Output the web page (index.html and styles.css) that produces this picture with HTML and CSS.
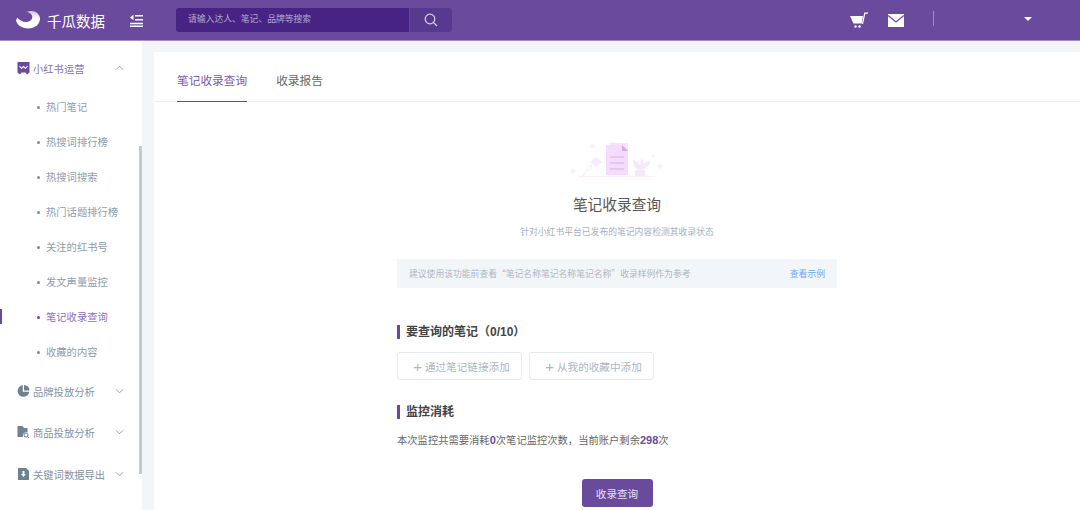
FILE: index.html
```html
<!DOCTYPE html>
<html lang="zh-CN">
<head>
<meta charset="utf-8">
<title>千瓜数据</title>
<link rel="stylesheet" href="styles.css">
</head>
<body>
<header class="topbar">
  <div class="brand">
    <svg class="logo" width="24" height="18" viewBox="0 0 24 18"><defs><linearGradient id="lg" x1="0" y1="0" x2="0" y2="1"><stop offset="0" stop-color="#cdbfe2"/><stop offset=".4" stop-color="#fff"/></linearGradient></defs><path d="M1.500 6.800C4 9.500 7 11.200 10.500 11 14 10.800 16.300 8.500 16.300 5.800 16.300 3.700 14 1.700 11 1 12 .3 14 0 15.500 0 20 0 24 3.500 24 8 24 13 19 17.500 12 17.500 6 17.500 .8 14 0 9.300z" fill="url(#lg)"/></svg>
    <span class="brand-name">千瓜数据</span>
  </div>
  <svg class="fold" width="13" height="13" viewBox="0 0 13 13"><path d="M0 3.500 3.500.8v5.400zM5 1h8v1.500H5zM5 5h8v1.500H5zM0 8.800h13v1.500H0zM0 11.500h13V13H0z" fill="#fff"/></svg>
  <div class="search">
    <div class="search-input">请输入达人、笔记、品牌等搜索</div>
    <div class="search-btn"><svg width="14" height="14" viewBox="0 0 14 14" fill="none" stroke="#d5cce6" stroke-width="1.300"><circle cx="6" cy="6" r="4.800"/><path d="m9.500 9.500 3.500 3.500"/></svg></div>
  </div>
  <div class="top-right">
    <svg class="cart" width="18" height="16" viewBox="0 0 18 16"><path d="M0 4h13l-1.300 7.500H3.500z" fill="#fff"/><path d="M12.500 12 14.800 1.200H18" fill="none" stroke="#fff" stroke-width="1.200"/><circle cx="5.500" cy="14.500" r="1.200" fill="#fff"/><circle cx="9.500" cy="14.500" r="1.200" fill="#fff"/></svg>
    <svg class="mail" width="16" height="13" viewBox="0 0 16 13"><rect width="16" height="13" fill="#fff"/><path d="m0 1.500 8 6.500 8-6.500" fill="none" stroke="#6a4a9c" stroke-width="1.200"/></svg>
    <span class="divider"></span>
    <span class="caret"></span>
  </div>
</header>

<div class="page">
  <aside class="sidebar">
    <div class="scrollbar"></div>
    <div class="group open">
      <svg class="gicon" width="12" height="13" viewBox="0 0 12 13"><path d="M0 0h12v10.500l-2.500 2-1.500-2H4l-1.500 2-2.500-2z" fill="#6a4a9c"/><path d="m2 4 2 2.500L6 4.500l2 2L10 4" fill="none" stroke="#fff" stroke-width="1.100"/></svg>
      <span class="gname">小红书运营</span>
      <svg class="chev" width="9" height="6" viewBox="0 0 10 6" fill="none" stroke="#8b97a6"><path d="m1 5 4-4 4 4"/></svg>
    </div>
    <ul class="submenu">
      <li class="sub">热门笔记</li>
      <li class="sub">热搜词排行榜</li>
      <li class="sub">热搜词搜索</li>
      <li class="sub">热门话题排行榜</li>
      <li class="sub">关注的红书号</li>
      <li class="sub">发文声量监控</li>
      <li class="sub active">笔记收录查询</li>
      <li class="sub">收藏的内容</li>
    </ul>
    <div class="group g1">
      <svg class="gicon" width="12" height="12" viewBox="0 0 12 12"><path d="M5.300.3v6.400h6.400A5.800 5.800 0 1 1 5.300.3z" fill="#6f8093"/><path d="M6.500 0A5.500 5.500 0 0 1 12 5.500H6.500z" fill="#6f8093"/></svg>
      <span class="gname">品牌投放分析</span>
      <svg class="chev" width="9" height="6" viewBox="0 0 10 6" fill="none" stroke="#8b97a6"><path d="m1 1 4 4 4-4"/></svg>
    </div>
    <div class="group g2">
      <svg class="gicon" width="12" height="12" viewBox="0 0 12 12"><path d="M0 0h5l1.500 2H10v4.500A3.500 3.500 0 0 0 5.500 11H0z" fill="#6f8093"/><circle cx="8.500" cy="9" r="2" fill="none" stroke="#6f8093"/><path d="m10 10.500 1.500 1.500" stroke="#6f8093"/></svg>
      <span class="gname">商品投放分析</span>
      <svg class="chev" width="9" height="6" viewBox="0 0 10 6" fill="none" stroke="#8b97a6"><path d="m1 1 4 4 4-4"/></svg>
    </div>
    <div class="group g3">
      <svg class="gicon" width="11" height="12" viewBox="0 0 11 12"><path d="M0 0h8l3 3v9H0z" fill="#6f8093"/><path d="M4.500 3h2v3H8L5.500 9 3 6h1.500z" fill="#fff"/></svg>
      <span class="gname">关键词数据导出</span>
      <svg class="chev" width="9" height="6" viewBox="0 0 10 6" fill="none" stroke="#8b97a6"><path d="m1 1 4 4 4-4"/></svg>
    </div>
  </aside>

  <main class="main">
    <nav class="tabs">
      <a class="tab current">笔记收录查询</a>
      <a class="tab">收录报告</a>
    </nav>
    <section class="content">
      <svg class="hero" width="94" height="35" viewBox="0 0 94 35">
        <path d="M8 33.500h77" stroke="#f8f1fd" stroke-width="1.500"/>
        <rect x="39" y="0" width="19" height="30" fill="#f6e4fc"/>
        <path d="M36 2h16l6 6v24H36z" fill="#f3dcfc"/>
        <path d="M52 2v6h6z" fill="#d6a6f3"/>
        <path d="M40 14h14M40 20h14M40 26h14" stroke="#e2bdf4" stroke-width="1.500"/>
        <path d="M22 0l3 3-3 3-3-3zM3 25l3 3-3 3-3-3zM90 20l3 3-3 3-3-3zM83 11l2 2-2 2-2-2z" fill="#f9f0fd"/>
        <path d="M13 33l3-5 6-2-2-5" stroke="#f7ecfc" stroke-width="1.200" fill="none"/>
        <path d="M20 19l6-5 6 5-6 5z" fill="#f7ecfc"/>
        <path d="M65 27h10v6H65z" fill="#f5e8fb"/>
        <path d="M70 27c-5-1-7-5-7-10 5 1 8 5 7 10zm0 0c-1-4 0-8 2-12 2 4 1 9-2 12zm0 0c0-5 4-8 10-9 0 5-4 8-10 9z" fill="#f5e8fb"/>
      </svg>
      <h1 class="title">笔记收录查询</h1>
      <p class="subtitle">针对小红书平台已发布的笔记内容检测其收录状态</p>
      <div class="tip">
        <span class="tip-text">建议使用该功能前查看“笔记名称笔记名称笔记名称”收录样例作为参考</span>
        <a class="tip-link">查看示例</a>
      </div>
      <h2 class="sec first">要查询的笔记（0/10）</h2>
      <div class="add-row">
        <button class="add"><span class="plus">+</span>通过笔记链接添加</button>
        <button class="add"><span class="plus">+</span>从我的收藏中添加</button>
      </div>
      <h2 class="sec second">监控消耗</h2>
      <p class="cost">本次监控共需要消耗<b>0</b>次笔记监控次数，当前账户剩余<b>298</b>次</p>
      <div class="actions"><button class="submit">收录查询</button></div>
    </section>
  </main>
</div>
</body>
</html>
```

FILE: styles.css
```css
* { box-sizing: border-box; }
html, body { margin: 0; padding: 0; }
body {
  width: 1080px;
  height: 510px;
  overflow: hidden;
  background: #f3f6f9;
  font-family: "Liberation Sans", "Noto Sans CJK SC", sans-serif;
}
h1, h2, p, ul { margin: 0; padding: 0; }
ul { list-style: none; }

.topbar {
  height: 41px;
  background: #6a4a9c;
  border-bottom: 1px solid #a18fc4;
  display: flex;
  align-items: center;
  color: #fff;
}
.brand { display: flex; align-items: center; margin-left: 16px; width: 114px; }
.logo { flex: none; }
.brand-name { margin-left: 7px; font-size: 14.500px; white-space: nowrap; }
.fold { flex: none; margin-left: 0; }
.search { display: flex; margin-left: 33px; width: 276px; height: 24px; border-radius: 3px; overflow: hidden; }
.search-input { width: 233px; background: #472483; color: #b6a8d1; font-size: 8.800px; line-height: 23px; padding-left: 12px; }
.search-btn { flex: 1; margin-left: 1px; background: #573a8f; display: flex; align-items: center; justify-content: center; }
.top-right { margin-left: auto; display: flex; align-items: center; }
.cart { margin-right: 20px; }
.mail { margin-right: 29px; }
.divider { width: 1px; height: 15px; background: #a18fc4; margin-right: 90px; margin-top: -3px; }
.caret { width: 0; height: 0; border: 4px solid transparent; border-top: 4px solid #fff; border-bottom: 0; margin-right: 48px; margin-top: -3px; }

.page { display: flex; height: 469px; }

.sidebar {
  position: relative;
  width: 142px;
  flex: none;
  background: #fff;
  padding-top: 17px;
}
.scrollbar { position: absolute; left: 139px; top: 105px; width: 3px; height: 328px; background: #c3cad0; }
.group { display: flex; align-items: center; height: 20px; padding-left: 17px; font-size: 10.300px; color: #8593a1; white-space: nowrap; }
.group.open .gname { color: #8a73b4; }
.gicon { flex: none; width: 13px; }
.gname { margin-left: 3px; }
.chev { position: absolute; left: 115px; }
.submenu { padding-top: 12px; }
.sub {
  position: relative;
  height: 35px;
  line-height: 35px;
  padding-left: 46px;
  font-size: 10.300px;
  color: #8f9cab;
}
.sub::before {
  content: "";
  position: absolute;
  left: 37px;
  top: 16px;
  width: 3px;
  height: 3px;
  border-radius: 50%;
  background: #7c8a99;
}
.sub.active { color: #8d70bd; }
.sub.active::before { background: #6a4a9c; }
.sub.active::after {
  content: "";
  position: absolute;
  left: 0;
  top: 9px;
  width: 2px;
  height: 15px;
  background: #6a4a9c;
}
.g1 { margin-top: 11px; }
.g2 { margin-top: 21px; }
.g3 { margin-top: 22px; }

.main { flex: 1; margin: 11px 0 0 12px; background: #fff; }
.tabs { height: 50px; border-bottom: 1px solid #edf0f4; display: flex; padding-left: 23px; gap: 29px; }
.tab { display: block; height: 50px; line-height: 58px; font-size: 11.700px; color: #666; white-space: nowrap; }
.tab.current { color: #7a5ab0; border-bottom: 1px solid #6a4a9c; }

.content { display: flex; flex-direction: column; width: 440px; margin-left: 243px; }
.hero { display: block; flex: none; align-self: center; margin-top: 41px; }
.title { margin-top: 16px; font-size: 14.700px; line-height: 22px; font-weight: 400; color: #555; text-align: center; }
.subtitle { margin-top: 9px; font-size: 8.800px; line-height: 14px; color: #a9b1ba; text-align: center; }
.tip {
  margin-top: 20px;
  flex: none;
  height: 29px;
  background: #f3f6f9;
  padding: 0 12px;
  display: flex;
  justify-content: space-between;
  align-items: center;
  font-size: 8.800px;
  color: #aeb6bf;
}
.tip-text { font-family: "Noto Sans CJK SC", sans-serif; }
.tip-link { color: #6ea6f5; }
.sec { font-size: 12px; line-height: 14px; color: #444; border-left: 3px solid #6a4a9c; padding-left: 6px; white-space: nowrap; }
.first { margin-top: 37px; }
.second { margin-top: 25px; }
.add-row { display: flex; gap: 7px; margin-top: 13px; }
.add {
  width: 125px;
  height: 28px;
  padding: 0 0 0 4px;
  background: #fff;
  border: 1px solid #e6e9ee;
  border-radius: 3px;
  color: #aeb6c1;
  font-family: inherit;
  font-size: 10.600px;
  display: flex;
  align-items: center;
  justify-content: center;
}
.plus { font-size: 15px; line-height: 1; margin-right: 3px; font-weight: 400; }
.cost { margin-top: 14px; font-size: 10.300px; line-height: 14px; color: #666; white-space: nowrap; }
.cost b { color: #6a4a9c; font-size: 11px; }
.actions { display: flex; justify-content: center; margin-top: 31px; }
.submit {
  width: 71px;
  height: 28px;
  padding: 0;
  border: 0;
  border-radius: 3px;
  background: #6a4a9c;
  color: #e9e3f3;
  font-family: inherit;
  font-size: 10.600px;
}
```
